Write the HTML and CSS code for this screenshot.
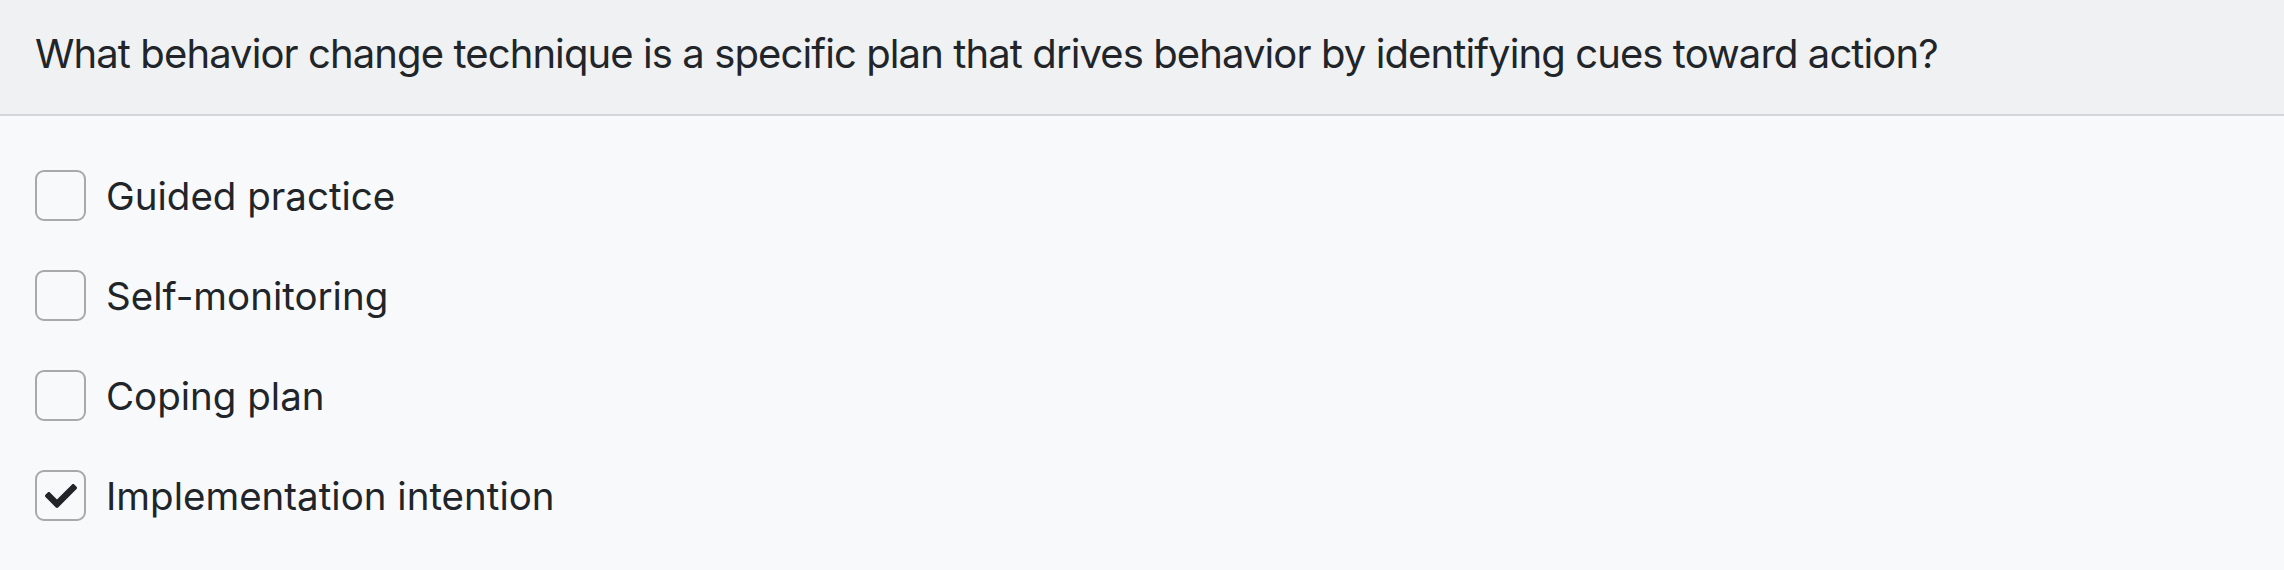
FILE: index.html
```html
<!DOCTYPE html>
<html lang="en">
<head>
<meta charset="utf-8">
<title>Question</title>
<link rel="stylesheet" href="styles.css">
</head>
<body>
<div class="question">
  <div class="q-header">What behavior change technique is a specific plan that drives behavior by identifying cues toward action?</div>
  <ul class="options">
    <li class="option"><span class="box"></span><span class="label">Guided practice</span></li>
    <li class="option"><span class="box"></span><span class="label">Self-monitoring</span></li>
    <li class="option"><span class="box"></span><span class="label">Coping plan</span></li>
    <li class="option"><span class="box checked"><svg class="check" viewBox="0 0 512 512" aria-hidden="true"><path d="M173.898 439.404l-166.4-166.4c-9.997-9.997-9.997-26.206 0-36.204l36.203-36.204c9.997-9.998 26.207-9.998 36.204 0L192 312.69 432.095 72.596c9.997-9.997 26.207-9.997 36.204 0l36.203 36.204c9.997 9.997 9.997 26.206 0 36.204l-294.4 294.401c-9.998 9.997-26.207 9.997-36.204-.001z"/></svg></span><span class="label">Implementation intention</span></li>
  </ul>
</div>
</body>
</html>
```

FILE: styles.css
```css
html, body {
  margin: 0;
  padding: 0;
  background: #f8f9fa;
}
body {
  font-family: Inter, "Noto Sans", sans-serif;
  color: #212529;
}
.question {
  display: flex;
  flex-direction: column;
}
.q-header {
  box-sizing: border-box;
  height: 116px;
  padding: 34px 35px 0;
  background: #f0f1f3;
  border-bottom: 2px solid #d4d5d8;
  font-size: 40px;
  line-height: 40px;
  letter-spacing: -0.9px;
}
.options {
  list-style: none;
  margin: 0;
  padding: 54px 35px 0;
  display: flex;
  flex-direction: column;
  gap: 49px;
}
.option {
  display: flex;
  align-items: center;
  gap: 20px;
  height: 51px;
}
.box {
  box-sizing: border-box;
  width: 51px;
  height: 51px;
  border: 2px solid #a9a9a9;
  border-radius: 9px;
  background: #f8f9fa;
  display: flex;
  align-items: center;
  justify-content: center;
  flex: none;
}
.check {
  width: 32px;
  height: 32px;
  fill: #212529;
}
.label {
  font-size: 38.5px;
  line-height: 1;
  padding-top: 2px;
}
```
